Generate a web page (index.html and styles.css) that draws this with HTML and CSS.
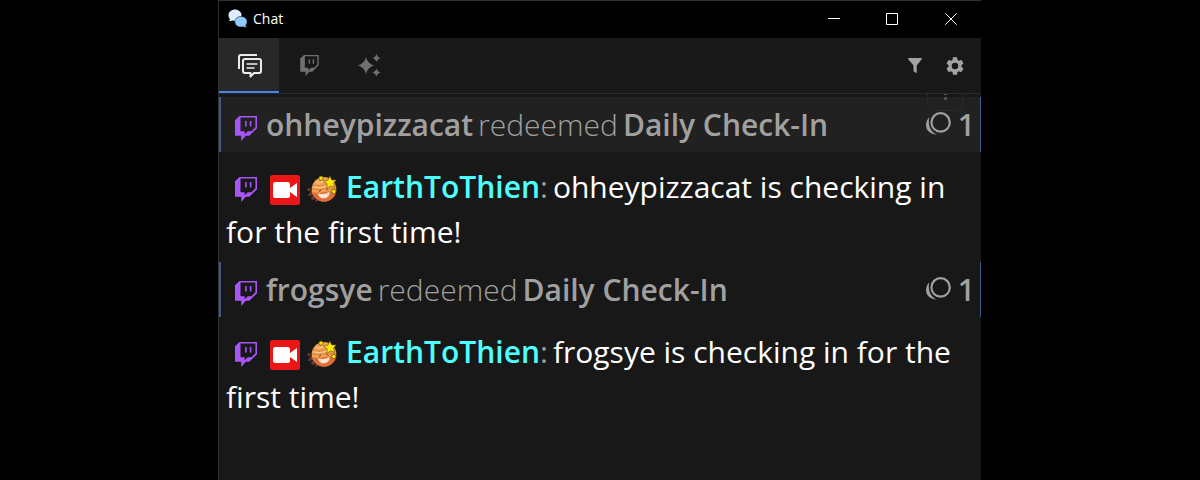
FILE: index.html
```html
<!DOCTYPE html>
<html lang="en">
<head>
<meta charset="utf-8">
<title>Chat</title>
<link rel="stylesheet" href="styles.css">
</head>
<body>
<svg class="defs" width="0" height="0" aria-hidden="true">
  <symbol id="twitch" viewBox="0 0 22 25">
    <path fill="currentColor" fill-rule="evenodd" d="M4.4 0H22v12.2L14.3 19.8H10.9L6.2 25V19.8H0V4.2ZM5.5 1.6V15.2H9.7V18.2L12.8 15.2H16.4L20.4 11.3V1.6ZM10.1 5H11.7V10.4H10.1ZM14.8 5H16.4V10.4H14.8Z"/>
  </symbol>
  <symbol id="planet" viewBox="0 0 30 28">
    <g fill="#6b3b35"><circle cx="2" cy="14.5" r="1.6"/><circle cx="5" cy="18" r="2.2"/><circle cx="2.5" cy="20" r="1.3"/><circle cx="6" cy="23" r="1.9"/><circle cx="9.5" cy="25.5" r="1.2"/></g>
    <circle cx="17" cy="14.3" r="12.3" fill="#f3a052"/>
    <path d="M5.500 17C12 20 23 14 29 17A12.300 12.300 0 0 1 8 22.600Z" fill="#e56b32"/>
    <path d="M6 10q8 3 13-1M5 14q10 1 15-1M21 14q4-1 8 0M7 20q4 2 7 1M23 21l4-1" fill="none" stroke="#cf7636" stroke-width=".8"/>
    <path d="M7 11.800q7 2 13-1M9 7.500q4 1 7-1" fill="none" stroke="#ffd093" stroke-width="1.200"/>
    <path d="M10.500 18Q17 20.500 23 16.500Q22.500 23.500 16.500 23.500Q12 23.500 10.500 18Z" fill="#fff1df" stroke="#c8804b" stroke-width=".5"/>
    <path d="M14 19.500v3.500M17 19.500v3.800M20 18.500v3.500" stroke="#ddb28c" stroke-width=".5"/>
    <path d="M12 16.500l2-1.500M19.500 14l1.500 1.500" stroke="#63351f" stroke-width="1"/>
    <path d="M22.800 1.200l2 3.900 4.400-.2-2.800 3.400 1.500 4.200-4.300-1.600-3.800 2.500.3-4.600-3.500-2.700 4.400-1Z" fill="#ffeb00" stroke="#6f5a10" stroke-width=".7"/>
    <circle cx="14" cy="3.200" r="2.100" fill="#ffe500" stroke="#6f5a10" stroke-width=".8"/>
    <circle cx="26.800" cy="16.500" r="2.100" fill="#ffe500" stroke="#6f5a10" stroke-width=".8"/>
  </symbol>
  <symbol id="points" viewBox="0 0 26 24">
    <circle cx="15.600" cy="10.400" r="9.200" fill="none" stroke="currentColor" stroke-width="2.200"/>
    <path d="M4.200 5.200C-.9 10.400-.7 22 11.800 22.500C4.600 19.200 2.900 12.500 4.200 5.200Z" fill="currentColor"/>
  </symbol>
</svg>

<main class="window">
  <header class="titlebar">
    <svg class="app-icon" viewBox="0 0 20 20">
      <path d="M7 .6c3.7 0 6.5 2.5 6.5 5.6S10.700 12 7 12c-.9 0-1.700-.1-2.500-.4L1 12.200l1-2.300C1 8.900.5 7.600.5 6.200.5 3.100 3.300.6 7 .6Z" fill="#dceeff"/>
      <path d="M13 7.500c3.500 0 6.100 2.200 6.100 5.200 0 1.400-.5 2.600-1.400 3.500l1 2.800-3.500-1.300c-.7.2-1.400.3-2.200.3-3.500 0-6.200-2.300-6.200-5.300S9.500 7.500 13 7.500Z" fill="#90caff" stroke="#000" stroke-width=".5"/>
    </svg>
    <span class="title">Chat</span>
    <div class="controls">
      <svg viewBox="0 0 12 12"><path d="M0 5.500H12"/></svg>
      <svg viewBox="0 0 12 12"><path d="M.5.5H11.500V11.500H.5Z"/></svg>
      <svg viewBox="0 0 12 12"><path d="M.3.3 11.700 11.700M11.700.3.3 11.700"/></svg>
    </div>
  </header>

  <nav class="toolbar">
    <div class="tab active">
      <svg class="tab-chat" viewBox="0 0 24 24" fill="none" stroke="currentColor" stroke-width="2" stroke-linejoin="round">
        <path d="M1 15V3Q1 1 3 1H19"/>
        <path d="M7 5H21Q23 5 23 7V17Q23 19 21 19H16L12.500 22.500V19H7Q5 19 5 17V7Q5 5 7 5Z"/>
        <path d="M8.500 10H19.500M8.500 14H16.500" stroke-width="1.700"/>
      </svg>
    </div>
    <div class="tab"><svg class="tab-twitch"><use href="#twitch"/></svg></div>
    <div class="tab">
      <svg class="tab-sparkles" viewBox="0 0 23 23" fill="currentColor">
        <path d="M8 3Q9.700 9.700 16 11.500 9.700 13.300 8 20 6.300 13.300 0 11.500 6.300 9.700 8 3Z"/>
        <path d="M18.500 0Q19.300 3.200 22.500 4 19.300 4.800 18.500 8 17.700 4.800 14.500 4 17.700 3.200 18.500 0ZM18.500 14.500Q19.300 17.700 22.500 18.500 19.300 19.300 18.500 22.500 17.700 19.300 14.500 18.500 17.700 17.700 18.500 14.500Z"/>
      </svg>
    </div>
    <div class="tools">
      <svg class="filter" viewBox="0 0 14 15"><path fill="currentColor" d="M.5 0H13.500Q14.300.3 13.700 1.200L8.700 7.500V15Q6.500 14.500 5.500 13V7.500L.3 1.200Q-.2.3.5 0Z"/></svg>
      <svg class="gear" viewBox="2 2 20 20"><path fill="currentColor" d="M19.140 12.940c.04-.3.060-.61.060-.94s-.02-.64-.07-.94l2.030-1.580c.18-.14.230-.41.120-.61l-1.920-3.320c-.12-.22-.37-.29-.59-.22l-2.390.96c-.5-.38-1.030-.7-1.620-.94l-.36-2.540c-.04-.24-.24-.41-.48-.41h-3.840c-.24 0-.43.17-.47.41l-.36 2.540c-.59.24-1.130.57-1.620.94l-2.390-.96c-.22-.08-.47 0-.59.22L2.740 8.870c-.12.210-.08.470.120.610l2.030 1.580c-.05.3-.09.630-.09.940s.02.640.070.940l-2.030 1.580c-.18.140-.23.410-.12.610l1.920 3.320c.12.220.370.290.590.220l2.390-.96c.5.380 1.030.7 1.620.94l.36 2.540c.05.240.24.410.48.410h3.840c.24 0 .44-.17.470-.41l.36-2.540c.59-.24 1.130-.56 1.620-.94l2.390.96c.22.080.47 0 .59-.22l1.920-3.320c.12-.22.070-.47-.12-.61ZM12 15.600a3.600 3.600 0 1 1 0-7.200 3.600 3.600 0 0 1 0 7.200Z"/></svg>
    </div>
  </nav>

  <section class="feed">
    <div class="more"><i></i><i></i></div>
    <article class="redeem hovered">
      <svg class="platform"><use href="#twitch"/></svg>
      <b class="user">ohheypizzacat</b><span class="verb">redeemed</span><b class="reward">Daily Check-In</b>
      <span class="cost"><svg class="points"><use href="#points"/></svg><b>1</b></span>
    </article>
    <article class="message"><svg class="platform"><use href="#twitch"/></svg><svg class="badge" viewBox="0 0 30 30"><rect width="30" height="30" rx="2.500" fill="#eb1616"/><path d="M5.500 7H17.500Q20 7 20 9.500V13L27 8V22L20 17V20.500Q20 23 17.500 23H5.500Q3 23 3 20.500V9.500Q3 7 5.500 7Z" fill="#fff"/></svg><svg class="planet"><use href="#planet"/></svg><b class="author">EarthToThien</b><span class="colon">:</span><span class="text">ohheypizzacat is checking in for the first time!</span></article>
    <article class="redeem">
      <svg class="platform"><use href="#twitch"/></svg>
      <b class="user">frogsye</b><span class="verb">redeemed</span><b class="reward">Daily Check-In</b>
      <span class="cost"><svg class="points"><use href="#points"/></svg><b>1</b></span>
    </article>
    <article class="message"><svg class="platform"><use href="#twitch"/></svg><svg class="badge" viewBox="0 0 30 30"><rect width="30" height="30" rx="2.500" fill="#eb1616"/><path d="M5.500 7H17.500Q20 7 20 9.500V13L27 8V22L20 17V20.500Q20 23 17.500 23H5.500Q3 23 3 20.500V9.500Q3 7 5.500 7Z" fill="#fff"/></svg><svg class="planet"><use href="#planet"/></svg><b class="author">EarthToThien</b><span class="colon">:</span><span class="text">frogsye is checking in for the first time!</span></article>
  </section>
</main>
</body>
</html>
```
FILE: styles.css
```css
* { box-sizing: border-box; }
body {
  margin: 0;
  height: 480px;
  overflow: hidden;
  background: #000;
  font-family: "Open Sans", sans-serif;
  display: flex;
}
.defs { position: absolute; }
svg { display: block; flex: none; }
.window {
  width: 763px;
  height: 480px;
  margin-left: 218px;
  background: #181818;
  border-left: 1px solid #303030;
  border-top: 1px solid #303030;
}
.titlebar {
  height: 37px;
  background: #000;
  display: flex;
  align-items: center;
  padding: 0 24px 1px 9px;
}
.app-icon { width: 20px; height: 20px; }
.title { color: #fff; font-size: 14px; line-height: 20px; margin-left: 5px; }
.controls { margin-left: auto; display: flex; gap: 47px; }
.controls svg { width: 12px; height: 12px; fill: none; stroke: #fff; stroke-width: 1; }
.controls svg:first-child { margin-right: -1px; }

.toolbar {
  height: 56px;
  display: flex;
  border-bottom: 1px solid #2a2a2a;
}
.tab {
  width: 60px;
  height: 55px;
  display: flex;
  align-items: center;
  justify-content: center;
  color: #6f6f6f;
}
.tab.active { background: #282828; color: #ededed; border-bottom: 2px solid #4285ed; padding: 2px 0 0 1px; }
.tab-chat { width: 24px; height: 24px; }
.tab-twitch { width: 19px; height: 21px; }
.tab-sparkles { width: 23px; height: 23px; }
.tools { margin-left: auto; padding-right: 17px; display: flex; align-items: center; gap: 24px; color: #a3a3a3; }
.filter { width: 14px; height: 15px; }
.gear { width: 18px; height: 18px; }

.feed { position: relative; padding-top: 3px; font-size: 30px; line-height: 45px; }
b { font-weight: 600; }
.more {
  position: absolute;
  right: 18px;
  top: 0;
  width: 36px;
  height: 17px;
  border: 1px solid #2a2a2a;
  border-top: 0;
  border-radius: 0 0 8px 8px;
  display: flex;
  flex-direction: column;
  align-items: center;
  gap: 2px;
}
.more i { width: 3px; height: 3px; border-radius: 50%; background: #5c5c5c; }
.more i:first-child { height: 1px; border-radius: 0; }
.redeem {
  height: 55px;
  display: flex;
  align-items: center;
  padding: 0 5px 0 14px;
  border-left: 2px solid #3c5c8c;
  border-right: 1px solid #3c5c8c;
  color: #a0a0a0;
}
.hovered { background: #212121; }
.platform { color: #a855f7; width: 22px; height: 25px; }
.redeem .platform { margin: 8px 9px 0 0; }
.verb { font-weight: 300; margin: 0 5px; }
.cost { margin-left: auto; display: flex; align-items: center; gap: 7px; }
.points { width: 26px; height: 24px; margin-top: -1px; }
.message {
  height: 110px;
  padding: 12px 7px 8px;
  color: #fff;
}
.message svg { display: inline-block; }
.message .platform { margin: 0 13px 0 9px; vertical-align: -4px; }
.badge { width: 30px; height: 30px; vertical-align: -7px; }
.planet { width: 30px; height: 28px; margin: 0 9px 0 7px; vertical-align: -5px; }
.author { color: #4dffff; }
.colon { color: #a0a0a0; margin-right: 5px; }
```
